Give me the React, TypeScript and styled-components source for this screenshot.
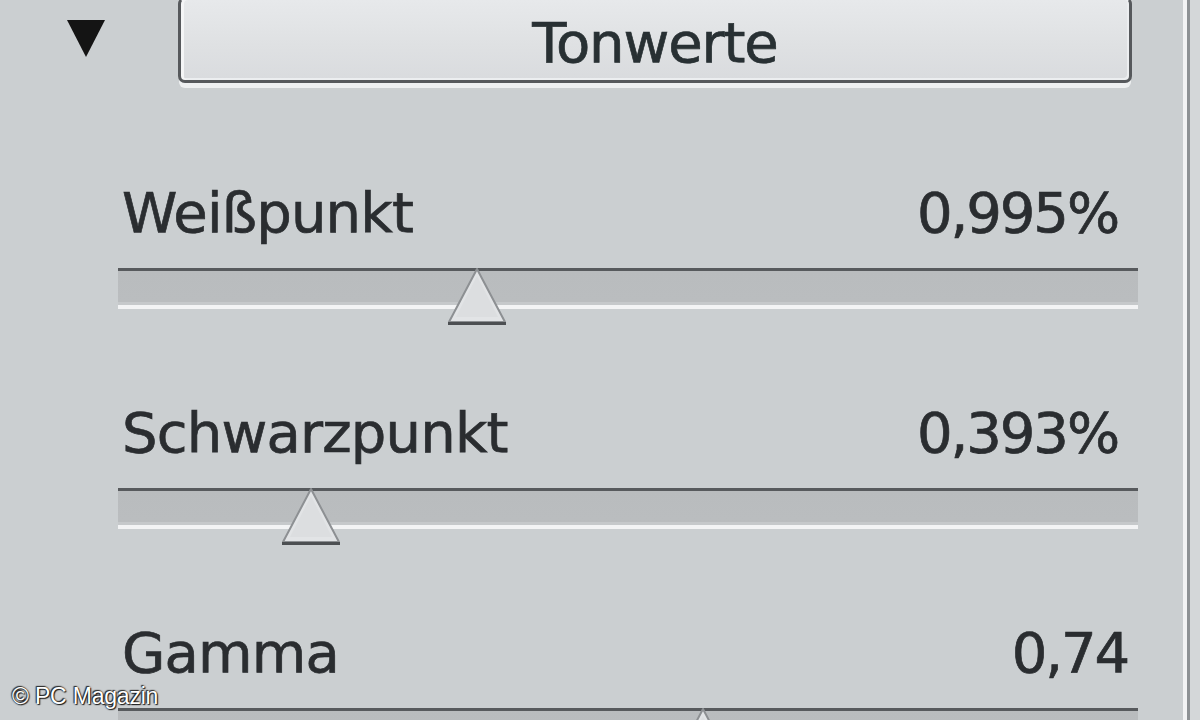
import React from "react";
import styled, { createGlobalStyle } from "styled-components";

const Global = createGlobalStyle`
  html, body { margin: 0; padding: 0; width: 1200px; height: 720px; overflow: hidden; background: #cdd0d2; }
  #root { width: 1200px; height: 720px; }
`;

const Page = styled.div`
  position: relative;
  display: flex;
  width: 1200px;
  height: 720px;
  overflow: hidden;
  background: #cdd0d2;
  font-family: "DejaVu Sans", Tahoma, sans-serif;
`;

const Panel = styled.div`
  flex: none;
  width: 1183px;
  display: flex;
  flex-direction: column;
  background: #cbcfd1;
`;

const EdgeHighlight = styled.div`
  flex: none;
  width: 4px;
  background: #f3f4f5;
`;

const EdgeShade = styled.div`
  flex: none;
  width: 3px;
  background: #8e9295;
`;

const Outside = styled.div`
  flex: 1;
  background: #d4d7d9;
`;

const Header = styled.div`
  flex: none;
  display: flex;
  align-items: flex-start;
  height: 90px;
`;

const Toggle = styled.div`
  flex: none;
  width: 0;
  height: 0;
  margin: 20px 0 0 67px;
  border-left: 19px solid transparent;
  border-right: 19px solid transparent;
  border-top: 37px solid #141414;
`;

const SectionButton = styled.button`
  flex: none;
  margin: -3px 0 0 73px;
  width: 954px;
  height: 86px;
  padding: 6px 0 0;
  border: 3px solid #56595c;
  border-top-color: #f7f8f9;
  border-radius: 7px;
  background: linear-gradient(to bottom, #e7e9eb 0%, #dfe1e3 55%, #d9dbde 100%);
  box-shadow: inset 3px 0 0 #f4f5f6, inset -2px -2px 0 #eceef0, 0 6px 0 -1px #eef0f1;
  font-family: "DejaVu Sans", Tahoma, sans-serif;
  font-size: 56px;
  letter-spacing: -1.1px;
  line-height: 1;
  color: #283033;
  -webkit-text-stroke: 0.7px #283033;
  text-align: center;
`;

const Controls = styled.div`
  flex: none;
  display: flex;
  flex-direction: column;
  gap: 93px;
  padding: 92px 45px 0 118px;
`;

const Section = styled.div`
  flex: none;
  display: flex;
  flex-direction: column;
  gap: 24px;
`;

const LabelRow = styled.div`
  flex: none;
  display: flex;
  justify-content: space-between;
  align-items: flex-start;
  height: 62px;
  font-size: 56px;
  line-height: 62px;
  letter-spacing: -0.8px;
  color: #2a2d30;
  -webkit-text-stroke: 0.7px #2a2d30;
`;

const Label = styled.span`
  padding-left: 4px;
`;

const Value = styled.span<{ $right: number }>`
  padding-right: ${(p) => p.$right}px;
  letter-spacing: -2.1px;
`;

const Track = styled.div`
  flex: none;
  position: relative;
  height: 41px;
  background: linear-gradient(
    to bottom,
    #575a5d 0,
    #575a5d 3px,
    #b9bcbe 3px,
    #babdbf 34px,
    #c6c9cb 34px,
    #c6c9cb 37px,
    #f3f4f5 37px,
    #f3f4f5 41px
  );
`;

const Thumb = styled.svg`
  position: absolute;
  top: 0;
  width: 62px;
  height: 58px;
  margin-left: -31px;
  overflow: visible;
`;

const Watermark = styled.div`
  position: absolute;
  left: 12px;
  bottom: 10px;
  font-family: "Liberation Sans", Arial, sans-serif;
  font-size: 23px;
  color: #ffffff;
  text-shadow: 0 0 2px #000, 1px 1px 1px #222, -1px -1px 1px #333;
  letter-spacing: -0.2px;
`;

type Row = { label: string; value: string; pos: number; right: number };

const rows: Row[] = [
  { label: "Weißpunkt", value: "0,995%", pos: 35.2, right: 20 },
  { label: "Schwarzpunkt", value: "0,393%", pos: 18.9, right: 20 },
  { label: "Gamma", value: "0,74", pos: 57.4, right: 10 },
];

function SliderThumb({ pos }: { pos: number }) {
  return (
    <Thumb style={{ left: `${pos}%` }} viewBox="0 0 62 58">
      <polygon points="31,1 59,54 3,54" fill="#e2e4e6" stroke="#8d9093" strokeWidth="2" strokeLinejoin="round" />
      <polygon points="31,8 52,49 10,49" fill="#dcdee0" />
      <rect x="2" y="54" width="58" height="3" fill="#4c4f52" />
    </Thumb>
  );
}

export default function App() {
  return (
    <>
      <Global />
      <Page>
        <Panel>
          <Header>
            <Toggle />
            <SectionButton>Tonwerte</SectionButton>
          </Header>
          <Controls>
            {rows.map((r) => (
              <Section key={r.label}>
                <LabelRow>
                  <Label>{r.label}</Label>
                  <Value $right={r.right}>{r.value}</Value>
                </LabelRow>
                <Track>
                  <SliderThumb pos={r.pos} />
                </Track>
              </Section>
            ))}
          </Controls>
        </Panel>
        <EdgeHighlight />
        <EdgeShade />
        <Outside />
        <Watermark>© PC Magazin</Watermark>
      </Page>
    </>
  );
}
